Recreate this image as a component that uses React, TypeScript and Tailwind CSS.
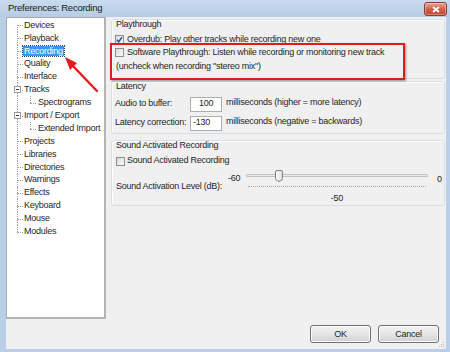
import React from 'react';

type TreeItem = {
  label: string;
  depth: 0 | 1;
  expander?: boolean;
  selected?: boolean;
};

const tree: TreeItem[] = [
  { label: 'Devices', depth: 0 },
  { label: 'Playback', depth: 0 },
  { label: 'Recording', depth: 0, selected: true },
  { label: 'Quality', depth: 0 },
  { label: 'Interface', depth: 0 },
  { label: 'Tracks', depth: 0, expander: true },
  { label: 'Spectrograms', depth: 1 },
  { label: 'Import / Export', depth: 0, expander: true },
  { label: 'Extended Import', depth: 1 },
  { label: 'Projects', depth: 0 },
  { label: 'Libraries', depth: 0 },
  { label: 'Directories', depth: 0 },
  { label: 'Warnings', depth: 0 },
  { label: 'Effects', depth: 0 },
  { label: 'Keyboard', depth: 0 },
  { label: 'Mouse', depth: 0 },
  { label: 'Modules', depth: 0 },
];

function TreeRow({ item, first, last }: { item: TreeItem; first: boolean; last: boolean }) {
  const trunk = last ? 'top-0 h-1/2' : first ? 'top-1/2 h-1/2' : 'inset-y-0';
  return (
    <div className="relative flex h-[12.9px] items-center">
      <span className={`absolute left-[10px] w-0 border-l border-dotted border-[#a0a0a0] ${trunk}`} />
      {item.depth === 0 ? (
        <span className="absolute left-[10px] top-1/2 w-[6px] border-t border-dotted border-[#a0a0a0]" />
      ) : (
        <>
          <span className="absolute left-[23px] top-0 h-1/2 w-0 border-l border-dotted border-[#a0a0a0]" />
          <span className="absolute left-[23px] top-1/2 w-[6px] border-t border-dotted border-[#a0a0a0]" />
        </>
      )}
      {item.expander && (
        <span className="absolute left-[7px] top-[3px] flex h-[7px] w-[7px] items-center justify-center border border-[#9a9a9a] bg-white">
          <span className="h-px w-[3px] bg-[#3a3a3a]" />
        </span>
      )}
      {item.selected ? (
        <span className="ml-[16px] bg-[#3399ff] px-px leading-[10px] text-white outline outline-1 outline-dotted outline-[#1a4f8a]">
          {item.label}
        </span>
      ) : (
        <span className={item.depth ? 'ml-[31px]' : 'ml-[17px]'}>{item.label}</span>
      )}
    </div>
  );
}

function Check({ checked }: { checked?: boolean }) {
  return (
    <span className="flex h-[9px] w-[9px] shrink-0 items-center justify-center border border-[#8e8f8f] bg-gradient-to-br from-[#d9d9d9] to-[#fbfbfb]">
      {checked && (
        <svg viewBox="0 0 8 8" className="h-[7px] w-[7px]">
          <path d="M1 4.3 L3.1 6.6 L7 1.2" fill="none" stroke="#27489e" strokeWidth="1.6" />
        </svg>
      )}
    </span>
  );
}

function Group({ title, className, children }: { title: string; className?: string; children?: React.ReactNode }) {
  return (
    <div className={`rounded-[3px] border border-[#d5dfe5] shadow-[inset_1px_1px_0_#fff] ${className ?? ''}`}>
      <div className="h-[9px] pl-[4px] leading-[9px]">{title}</div>
      {children}
    </div>
  );
}

function NumBox({ value, pad }: { value: string; pad: string }) {
  return (
    <span className={`flex h-[15px] w-[32px] items-center border border-[#abadb3] bg-white ${pad}`}>{value}</span>
  );
}

function Button({ label }: { label: string }) {
  return (
    <button className="h-[18px] w-[61px] rounded-[3px] border border-[#707070] bg-gradient-to-b from-[#f2f2f2] via-[#e6e6e6] to-[#d0d0d0] leading-[16px] shadow-[inset_0_0_0_1px_#fbfbfb]">
      {label}
    </button>
  );
}

export default function App() {
  return (
    <div className="relative flex h-[352px] w-[450px] flex-col overflow-hidden bg-[#b9cfe8] font-['Liberation_Sans',Arial,sans-serif] text-[9px] tracking-[-0.25px] text-[#1f1f1f]">
      {/* title bar */}
      <div className="flex h-[17px] shrink-0 items-center justify-between bg-gradient-to-b from-[#c9dbee] to-[#b6cce6] pl-[8px] pr-[3px]">
        <span className="text-[9.5px] text-[#1a1a1a]">Preferences: Recording</span>
        <span className="mt-px flex h-[14px] w-[23px] items-center justify-center rounded-[3px] border border-[#8a3b2e] bg-gradient-to-b from-[#e9a494] via-[#d35f4b] to-[#c24631] shadow-[inset_0_0_0_1px_rgba(255,255,255,0.35)]">
          <svg viewBox="0 0 8 7" className="h-[7px] w-[8px]">
            <path d="M1 1 L7 6 M7 1 L1 6" stroke="#fff" strokeWidth="1.8" />
          </svg>
        </span>
      </div>

      {/* body */}
      <div className="relative mb-[3px] ml-[6px] mr-[4px] flex flex-1 flex-col bg-[#f0f0f0]">
        <div className="flex h-[302px]">
          {/* tree */}
          <div className="h-full w-[100px] shrink-0 border border-b-2 border-r-2 border-[#a9a9a9] border-b-[#b4b4b4] border-r-[#b4b4b4] bg-white pt-px">
            {tree.map((item, i) => (
              <TreeRow key={item.label} item={item} first={i === 0} last={i === tree.length - 1} />
            ))}
          </div>

          {/* settings */}
          <div className="flex-1 pl-[5px] pr-px pt-[2px]">
            <Group title="Playthrough" className="h-[60px]">
              <div className="mt-[4px] flex h-[13px] items-center gap-[3px] pl-[3px]">
                <Check checked />
                <span>Overdub: Play other tracks while recording new one</span>
              </div>
              <div className="flex h-[13px] items-center gap-[3px] pl-[3px]">
                <Check />
                <span>Software Playthrough: Listen while recording or monitoring new track</span>
              </div>
              <div className="mt-px flex h-[13px] items-center pl-[4px]">
                (uncheck when recording "stereo mix")
              </div>
            </Group>

            <Group title="Latency" className="mt-[2px] h-[53px]">
              <div className="mt-[5px] flex h-[16px] items-center pl-[3px]">
                <span className="w-[75px]">Audio to buffer:</span>
                <NumBox value="100" pad="pl-[8px]" />
                <span className="ml-[4px] pb-[3px]">milliseconds (higher = more latency)</span>
              </div>
              <div className="mt-[3px] flex h-[16px] items-center pl-[3px]">
                <span className="w-[75px]">Latency correction:</span>
                <NumBox value="-130" pad="pl-[2px]" />
                <span className="ml-[4px] pb-[3px]">milliseconds (negative = backwards)</span>
              </div>
            </Group>

            <Group title="Sound Activated Recording" className="mt-[6px] h-[66px]">
              <div className="mt-[5px] flex h-[12px] items-center gap-[2px] pl-[4px]">
                <Check />
                <span>Sound Activated Recording</span>
              </div>
              <div className="mt-px flex h-[36px] pl-[4px]">
                <span className="mt-[13px] w-[112px] leading-[10px]">Sound Activation Level (dB):</span>
                <span className="mt-[5px] w-[18px] leading-[10px]">-60</span>
                <div className="flex w-[182px] flex-col">
                  <div className="relative h-[16px]">
                    <span className="absolute left-0 right-0 top-[6px] h-[3px] rounded-[1px] border border-[#c2c2c2] bg-[#e9e9e9]" />
                    <svg viewBox="0 0 8 12" className="absolute left-[29px] top-[2px] h-[12px] w-[8px]">
                      <defs>
                        <linearGradient id="thumb" x1="0" y1="0" x2="1" y2="0">
                          <stop offset="0" stopColor="#ffffff" />
                          <stop offset="1" stopColor="#dcdcdc" />
                        </linearGradient>
                      </defs>
                      <path d="M0.5 2 Q0.5 0.5 2 0.5 H6 Q7.5 0.5 7.5 2 V8.5 Q7.5 10 6 10.5 L4 11.5 L2 10.5 Q0.5 10 0.5 8.5 Z" fill="url(#thumb)" stroke="#7f7f7f" />
                    </svg>
                  </div>
                  <span className="mx-[2px] mt-[2px] border-t border-dotted border-[#a8a8a8]" />
                  <span className="mt-[6px] text-center leading-[10px]">-50</span>
                </div>
                <span className="ml-[9px] mt-[6px] leading-[10px]">0</span>
              </div>
            </Group>
          </div>
        </div>

        <div className="flex justify-end gap-[7px] pr-[7px] pt-[6px]">
          <Button label="OK" />
          <Button label="Cancel" />
        </div>

        {/* resize grip */}
        <svg viewBox="0 0 6 6" className="absolute bottom-px right-px h-[6px] w-[6px]">
          <rect x="4" y="0" width="1" height="1" fill="#b5b5b5" />
          <rect x="2" y="2" width="1" height="1" fill="#b5b5b5" />
          <rect x="4" y="2" width="1" height="1" fill="#b5b5b5" />
          <rect x="0" y="4" width="1" height="1" fill="#b5b5b5" />
          <rect x="2" y="4" width="1" height="1" fill="#b5b5b5" />
          <rect x="4" y="4" width="1" height="1" fill="#b5b5b5" />
        </svg>
      </div>

      {/* annotation: red highlight box */}
      <div className="absolute left-[110px] top-[43px] h-[37px] w-[295px] border-[2.5px] border-[#e01b1b] shadow-[1px_1px_2px_rgba(0,0,0,0.4)]" />

      {/* annotation: red arrow */}
      <svg className="absolute left-0 top-0 h-[352px] w-[450px]" viewBox="0 0 450 352">
        <line x1="97" y1="91" x2="72" y2="65" stroke="#e3191b" strokeWidth="2.4" strokeLinecap="round" />
        <polygon points="65,57 77,63 70,70" fill="#e3191b" />
      </svg>
    </div>
  );
}
